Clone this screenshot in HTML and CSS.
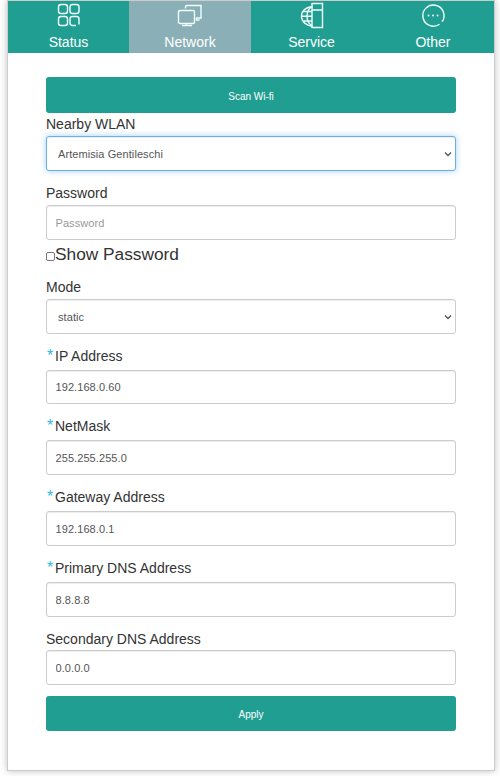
FILE: index.html
```html
<!DOCTYPE html>
<html lang="en">
<head>
<meta charset="utf-8">
<title>Network</title>
<link rel="stylesheet" href="styles.css">
</head>
<body>
<main class="panel">
  <nav class="tabs">
    <a class="tab"><svg class="icon" viewBox="0 0 26 26"><rect x="2.500" y="3.500" width="9" height="9" rx="2.500"/><rect x="14" y="3.500" width="9" height="9" rx="2.500"/><rect x="2.500" y="15.500" width="9" height="9" rx="2.500"/><path d="M20 24.500h-3.500a2.500 2.500 0 0 1-2.500-2.500v-4a2.500 2.500 0 0 1 2.500-2.500h4a2.500 2.500 0 0 1 2.500 2.500v5.500"/></svg><span>Status</span></a>
    <a class="tab active"><svg class="icon" viewBox="0 0 26 26"><rect x="1.500" y="9.500" width="16" height="13" rx="1.500"/><path d="M8.500 7.500v-1.500a1.500 1.500 0 0 1 1.500-1.500h14v12.500h-4.500v2h3M5 24.500h10M9.500 22.500v2"/></svg><span>Network</span></a>
    <a class="tab"><svg class="icon" viewBox="0 0 26 26"><path d="M13.500 5.700C7 5.700 2.500 10 2.500 15.200S7 25 13.500 25M12.500 6C6.500 10 6.500 20.500 12.500 24.500M2.500 15.200h10.500M4 10.500h9M4 20h9"/><path d="M13 2.500h10.500v24H13zM13 9h10.500"/></svg><span>Service</span></a>
    <a class="tab"><svg class="icon" viewBox="0 0 26 26"><path d="M19.500 23.300a10.600 10.600 0 1 1 2.600-2.600"/><path class="dots" d="M8.500 14.500h.1M13 14.500h.1M17.500 14.500h.1"/></svg><span>Other</span></a>
  </nav>
  <form class="form">
    <button type="button" class="button scan">Scan Wi-fi</button>
    <div class="field">
      <label class="nearby" for="wlan">Nearby WLAN</label>
      <div class="select"><select class="control focused" id="wlan"><option>Artemisia Gentileschi</option></select><svg class="chevron" viewBox="0 0 8 6"><path d="M1 1.500l3 3 3-3"/></svg></div>
    </div>
    <div class="field password">
      <label for="password">Password</label>
      <input class="control" id="password" type="text" placeholder="Password">
    </div>
    <div class="check"><input type="checkbox" id="show"><label class="show" for="show">Show Password</label></div>
    <div class="field">
      <label class="mode" for="mode">Mode</label>
      <div class="select"><select class="control" id="mode"><option>static</option></select><svg class="chevron" viewBox="0 0 8 6"><path d="M1 1.500l3 3 3-3"/></svg></div>
    </div>
    <div class="field required ip">
      <label for="ip"><span class="star">*</span>IP Address</label>
      <input class="control" id="ip" value="192.168.0.60">
    </div>
    <div class="field required">
      <label for="mask"><span class="star">*</span>NetMask</label>
      <input class="control" id="mask" value="255.255.255.0">
    </div>
    <div class="field required">
      <label for="gateway"><span class="star">*</span>Gateway Address</label>
      <input class="control" id="gateway" value="192.168.0.1">
    </div>
    <div class="field required">
      <label for="dns1"><span class="star">*</span>Primary DNS Address</label>
      <input class="control" id="dns1" value="8.8.8.8">
    </div>
    <div class="field secondary">
      <label for="dns2">Secondary DNS Address</label>
      <input class="control" id="dns2" value="0.0.0.0">
    </div>
    <button type="button" class="button apply">Apply</button>
  </form>
</main>
</body>
</html>
```
FILE: styles.css
```css
* { box-sizing: border-box; }
body {
  min-height: 776px;
  margin: 0;
  background: #fff;
  color: #333;
  font-family: "Liberation Sans", Arial, sans-serif;
  font-size: 14px;
}
.panel {
  width: 488px;
  height: 771px;
  margin-left: 7px;
  border: 1px solid #ccc;
  box-shadow: 0 0 7px rgba(0, 0, 0, .25);
}
.tabs { display: grid; grid-template-columns: 121px 122px 121px 122px; height: 52px; }
.tab {
  display: flex;
  flex-direction: column;
  align-items: center;
  background: #219e92;
  color: #fff;
  line-height: 20px;
}
.tab.active { background: #8aafb7; }
.icon {
  width: 26px;
  height: 26px;
  margin-bottom: 5px;
  overflow: visible;
  fill: none;
  stroke: #f0fffd;
  stroke-width: 1.4;
}
.icon .dots { stroke-width: 1.8; stroke-linecap: round; }
.form { display: flex; flex-direction: column; padding: 24px 38px 0; }
.button {
  height: 35px;
  padding: 0;
  border: 0;
  border-radius: 3px;
  background: #219e92;
  color: #fff;
  font: 10px "Liberation Sans", Arial, sans-serif;
}
.scan { height: 36px; padding-top: 2px; }
.apply { margin-top: 11px; padding-top: 2px; }
.field { display: flex; flex-direction: column; }
.field label { height: 23px; line-height: 22px; }
.password { margin-top: 11px; }
.required { margin-top: 12px; }
.required label { height: 24px; line-height: 21px; }
.secondary { margin-top: 10px; }
.secondary label { line-height: 24px; }
.star {
  display: inline-block;
  width: 9px;
  padding-left: 1px;
  color: #2bb8e4;
  font-size: 16px;
  line-height: 16px;
}
.control {
  display: block;
  width: 100%;
  height: 35px;
  padding: 0 8.5px;
  border: 1px solid #ccc;
  border-radius: 3px;
  background: #fff;
  box-shadow: inset 0 1px 1px rgba(0, 0, 0, .075);
  color: #555;
  font: 11px "Liberation Sans", Arial, sans-serif;
  letter-spacing: .08px;
  appearance: none;
  outline: 0;
}
.control::placeholder { color: #999; }
.ip .control { height: 34px; }
.select { position: relative; }
.select .control { padding-left: 11px; }
.focused {
  border-color: #66afe9;
  box-shadow: inset 0 1px 1px rgba(0, 0, 0, .075), 0 0 6px rgba(102, 175, 233, .6);
}
.chevron {
  position: absolute;
  right: 4px;
  top: 15px;
  width: 8px;
  height: 6px;
  fill: none;
  stroke: #555;
  stroke-width: 1.3;
}
.check { display: flex; height: 36px; }
.check input {
  appearance: none;
  width: 9px;
  height: 9px;
  margin: 12px 0 0;
  border: 1px solid #767683;
  border-radius: 2px;
}
.show { font-size: 17.3px; line-height: 28px; }
```
